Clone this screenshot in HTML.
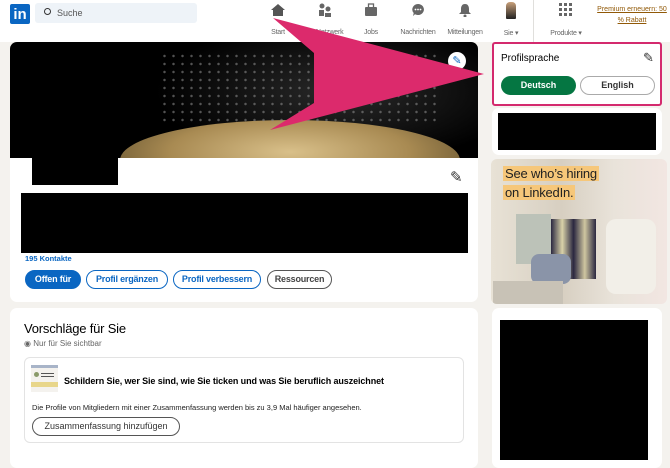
<!DOCTYPE html>
<html><head><meta charset="utf-8">
<style>
*{margin:0;padding:0;box-sizing:border-box}
body{width:670px;height:456px;overflow:hidden;background:#f4f2ee;font-family:"Liberation Sans",sans-serif;position:relative;color:#000}
.a{position:absolute}
.hdr{left:0;top:0;width:670px;height:42px;background:#fff}
.nav{font-size:7px;color:#666;text-align:center;width:60px;margin-left:-30px;top:29px;letter-spacing:-0.2px}
.card{background:#fff;border-radius:7px}
.btn{position:absolute;top:270px;height:19px;border-radius:10px;font-size:9px;font-weight:bold;line-height:17px;text-align:center;border:1px solid #0a66c2;color:#0a66c2;letter-spacing:-0.2px}
</style></head><body>
<div class="a hdr"></div>
<div class="a" style="left:10px;top:4px;width:20px;height:20px;background:#0a66c2;border-radius:2px;color:#fff;font-weight:bold;font-size:15px;line-height:21px;text-align:center">in</div>
<div class="a" style="left:35px;top:3px;width:162px;height:20px;background:#eef3f8;border-radius:3px"></div>
<div class="a" style="left:44px;top:8px;width:7px;height:7px;border:1.5px solid #333;border-radius:50%"></div>
<div class="a" style="left:57px;top:8px;font-size:9px;color:#555">Suche</div>
<svg class="a" style="left:270px;top:3px" width="16" height="14"><path d="M8 1 L15 7 H13 V13 H3 V7 H1 Z" fill="#555"/></svg>
<svg class="a" style="left:318px;top:3px" width="14" height="14"><circle cx="4" cy="3" r="2.5" fill="#666"/><circle cx="10" cy="6" r="2.5" fill="#666"/><rect x="1" y="7" width="5" height="6" fill="#666"/><rect x="7" y="10" width="6" height="4" fill="#666"/></svg>
<svg class="a" style="left:364px;top:3px" width="14" height="14"><rect x="1" y="4" width="12" height="9" rx="1" fill="#666"/><rect x="4.5" y="1" width="5" height="4" fill="none" stroke="#666" stroke-width="1.3"/></svg>
<svg class="a" style="left:411px;top:3px" width="14" height="14"><path d="M7 1a6 5.5 0 1 1-3 10.3L2 13l.7-3A6 5.5 0 0 1 7 1z" fill="#666"/><circle cx="4.5" cy="6.5" r=".9" fill="#fff"/><circle cx="7" cy="6.5" r=".9" fill="#fff"/><circle cx="9.5" cy="6.5" r=".9" fill="#fff"/></svg>
<svg class="a" style="left:458px;top:3px" width="14" height="14"><path d="M7 1c3 0 4 2.5 4 5v3l2 2H1l2-2V6c0-2.5 1-5 4-5z" fill="#666"/><circle cx="7" cy="13" r="1.5" fill="#666"/></svg>
<div class="a" style="left:506px;top:2px;width:10px;height:17px;background:linear-gradient(#c9a07a,#222);border-radius:4px 4px 1px 1px"></div>
<div class="a nav" style="left:278px">Start</div>
<div class="a nav" style="left:325px">Ihr Netzwerk</div>
<div class="a nav" style="left:371px">Jobs</div>
<div class="a nav" style="left:418px">Nachrichten</div>
<div class="a nav" style="left:465px">Mitteilungen</div>
<div class="a nav" style="left:511px">Sie ▾</div>
<div class="a" style="left:533px;top:0;width:1px;height:42px;background:#e0dfdc"></div>
<svg class="a" style="left:559px;top:3px" width="13" height="13"><g fill="#666"><rect x="0" y="0" width="3" height="3"/><rect x="5" y="0" width="3" height="3"/><rect x="10" y="0" width="3" height="3"/><rect x="0" y="5" width="3" height="3"/><rect x="5" y="5" width="3" height="3"/><rect x="10" y="5" width="3" height="3"/><rect x="0" y="10" width="3" height="3"/><rect x="5" y="10" width="3" height="3"/><rect x="10" y="10" width="3" height="3"/></g></svg>
<div class="a nav" style="left:566px">Produkte ▾</div>
<div class="a" style="left:594px;top:4px;width:76px;font-size:7px;color:#915907;text-decoration:underline;text-align:center;line-height:11px">Premium erneuern: 50 % Rabatt</div>

<div class="a card" style="left:10px;top:42px;width:468px;height:260px"></div>
<div class="a" style="left:10px;top:42px;width:468px;height:116px;border-radius:7px 7px 0 0;overflow:hidden;background:radial-gradient(ellipse 230px 90px at 330px 50px,#2a2a2a,#000 80%),#000">
<div class="a" style="left:110px;top:78px;width:340px;height:80px;border-radius:50% 50% 0 0;background:radial-gradient(ellipse at 50% 40%,#d9c08a,#a88a52 50%,#5a4a2a 90%)"></div>
<div class="a" style="left:150px;top:10px;width:280px;height:70px;background:radial-gradient(circle,#888 1px,transparent 1.5px) 0 0/9px 8px;opacity:.6"></div>
</div>
<div class="a" style="left:448px;top:52px;width:18px;height:18px;border-radius:50%;background:#fff;color:#0a66c2;font-size:11px;text-align:center;line-height:18px">✎</div>
<div class="a" style="left:32px;top:120px;width:86px;height:65px;background:#000"></div>
<div class="a" style="left:450px;top:168px;font-size:15px;color:#333">✎</div>
<div class="a" style="left:21px;top:193px;width:447px;height:60px;background:#000"></div>
<div class="a" style="left:25px;top:254px;font-size:7.5px;font-weight:bold;color:#0a66c2">195 Kontakte</div>
<div class="btn" style="left:25px;width:56px;background:#0a66c2;color:#fff">Offen für</div>
<div class="btn" style="left:86px;width:82px">Profil ergänzen</div>
<div class="btn" style="left:173px;width:88px">Profil verbessern</div>
<div class="btn" style="left:267px;width:65px;border-color:#555;color:#444">Ressourcen</div>

<div class="a card" style="left:10px;top:308px;width:468px;height:160px"></div>
<div class="a" style="left:24px;top:321px;font-size:13px;letter-spacing:-0.2px">Vorschläge für Sie</div>
<div class="a" style="left:24px;top:339px;font-size:8px;color:#666">◉ Nur für Sie sichtbar</div>
<div class="a" style="left:24px;top:357px;width:440px;height:86px;border:1px solid #e3e3e3;border-radius:6px"></div>
<div class="a" style="left:31px;top:365px;width:27px;height:27px;background:#f4f2ee;border-top:3px solid #a8b4c8"><div class="a" style="left:3px;top:4px;width:5px;height:5px;border-radius:50%;background:#8a9a6a"></div><div class="a" style="left:10px;top:5px;width:13px;height:1px;background:#555;box-shadow:0 3px #555"></div><div class="a" style="left:0;top:14px;width:27px;height:5px;background:#e8d68a"></div></div>
<div class="a" style="left:64px;top:376px;font-size:9px;font-weight:bold;letter-spacing:-0.1px">Schildern Sie, wer Sie sind, wie Sie ticken und was Sie beruflich auszeichnet</div>
<div class="a" style="left:32px;top:403px;font-size:7.5px;color:#222">Die Profile von Mitgliedern mit einer Zusammenfassung werden bis zu 3,9 Mal häufiger angesehen.</div>
<div class="a" style="left:32px;top:417px;width:148px;height:19px;border:1px solid #555;border-radius:10px;font-size:9px;line-height:17px;text-align:center;color:#333">Zusammenfassung hinzufügen</div>

<div class="a card" style="left:492px;top:42px;width:170px;height:64px;border:2.5px solid #d42a6e;border-radius:3px"></div>
<div class="a" style="left:501px;top:53px;font-size:10px">Profilsprache</div>
<div class="a" style="left:643px;top:50px;font-size:13px;color:#333">✎</div>
<div class="a" style="left:501px;top:76px;width:75px;height:19px;background:#057642;border-radius:10px;color:#fff;font-size:9px;font-weight:bold;line-height:19px;text-align:center">Deutsch</div>
<div class="a" style="left:580px;top:76px;width:75px;height:19px;border:1px solid #aaa;border-radius:10px;color:#333;font-size:9px;font-weight:bold;line-height:17px;text-align:center">English</div>
<div class="a card" style="left:492px;top:108px;width:170px;height:47px"></div>
<div class="a" style="left:498px;top:113px;width:158px;height:37px;background:#000"></div>
<div class="a" style="left:491px;top:159px;width:176px;height:145px;border-radius:6px;overflow:hidden;background:linear-gradient(90deg,#e8e2d6,#d7cfc1 40%,#e9e3da 70%,#f2e6e2)">
<div class="a" style="left:25px;top:55px;width:35px;height:50px;background:#bcc2b8"></div>
<div class="a" style="left:60px;top:60px;width:45px;height:60px;background:linear-gradient(90deg,#2a2740,#d9d2a8,#2a2740,#cfc6a0,#2a2740)"></div>
<div class="a" style="left:40px;top:95px;width:40px;height:30px;background:#8a94a8;border-radius:8px"></div>
<div class="a" style="left:115px;top:60px;width:50px;height:75px;background:#f2efe8;border-radius:10px"></div>
<div class="a" style="left:2px;top:122px;width:70px;height:23px;background:#c8c2b6"></div>
<div class="a" style="left:12px;top:7px;background:#f6c77a;font-size:13px;padding:0 2px;color:#222;letter-spacing:-0.2px">See who’s hiring</div>
<div class="a" style="left:12px;top:26px;background:#f6c77a;font-size:13px;padding:0 2px;color:#222;letter-spacing:-0.2px">on LinkedIn.</div>
</div>
<div class="a card" style="left:492px;top:308px;width:170px;height:160px"></div>
<div class="a" style="left:500px;top:320px;width:148px;height:140px;background:#000"></div>

<svg class="a" style="left:0;top:0" width="670" height="456"><polygon points="273,18 484,74 270,130 314,103 314,53" fill="#dc2a6c"/></svg>
</body></html>
